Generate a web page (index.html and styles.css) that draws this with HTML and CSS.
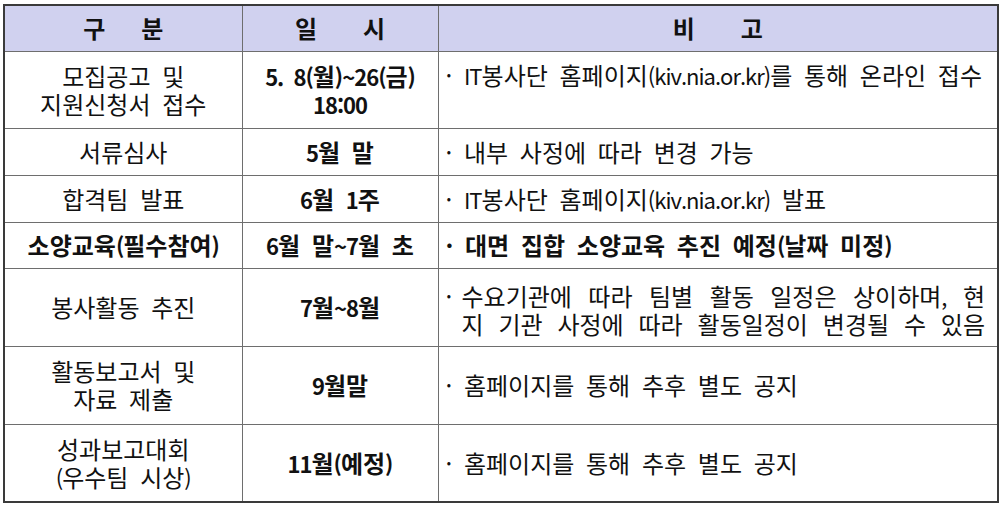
FILE: index.html
```html
<!DOCTYPE html>
<html lang="ko">
<head>
<meta charset="utf-8">
<link rel="stylesheet" href="styles.css">
</head>
<body>
<div class="wrap">
<table class="sched">
  <colgroup>
    <col class="c1"><col class="c2"><col class="c3">
  </colgroup>
  <thead>
    <tr class="head">
      <th><span class="sp sp1"><span>구</span><span>분</span></span></th>
      <th><span class="sp sp2"><span>일</span><span>시</span></span></th>
      <th><span class="sp sp2"><span>비</span><span>고</span></span></th>
    </tr>
  </thead>
  <tbody>
    <tr class="r77">
      <td class="name">모집공고 및<br>지원신청서 접수</td>
      <td class="date"><span class="en">5. 8(</span>월<span class="en">)~26(</span>금<span class="en">)</span><br><span class="en">18:00</span></td>
      <td class="note"><div class="raise">· <span class="en">IT</span>봉사단 홈페이지<span class="en">(kiv.nia.or.kr)</span>를 통해 온라인 접수</div></td>
    </tr>
    <tr class="r47">
      <td class="name">서류심사</td>
      <td class="date"><span class="en">5</span>월 말</td>
      <td class="note">· 내부 사정에 따라 변경 가능</td>
    </tr>
    <tr class="r47">
      <td class="name">합격팀 발표</td>
      <td class="date"><span class="en">6</span>월 <span class="en">1</span>주</td>
      <td class="note">· <span class="en">IT</span>봉사단 홈페이지<span class="en">(kiv.nia.or.kr)</span> 발표</td>
    </tr>
    <tr class="r46 strong">
      <td class="name">소양교육<span class="en">(</span>필수참여<span class="en">)</span></td>
      <td class="date"><span class="en">6</span>월 말<span class="en">~7</span>월 초</td>
      <td class="note">· 대면 집합 소양교육 추진 예정<span class="en">(</span>날짜 미정<span class="en">)</span></td>
    </tr>
    <tr class="r78">
      <td class="name">봉사활동 추진</td>
      <td class="date"><span class="en">7</span>월<span class="en">~8</span>월</td>
      <td class="note">
        <div class="hang">
          <span class="bul">·</span>
          <div class="lines">
            <div class="just">수요기관에 따라 팀별 활동 일정은 상이하며<span class="en">,</span> 현</div>
            <div class="just">지 기관 사정에 따라 활동일정이 변경될 수 있음</div>
          </div>
        </div>
      </td>
    </tr>
    <tr class="r78">
      <td class="name">활동보고서 및<br>자료 제출</td>
      <td class="date"><span class="en">9</span>월말</td>
      <td class="note">· 홈페이지를 통해 추후 별도 공지</td>
    </tr>
    <tr class="r78">
      <td class="name">성과보고대회<br><span class="en">(</span>우수팀 시상<span class="en">)</span></td>
      <td class="date"><span class="en">11</span>월<span class="en">(</span>예정<span class="en">)</span></td>
      <td class="note">· 홈페이지를 통해 추후 별도 공지</td>
    </tr>
  </tbody>
</table>
</div>
</body>
</html>
```

FILE: styles.css
```css
html, body {
  margin: 0;
  padding: 0;
  background: #ffffff;
}
body {
  font-family: "Noto Sans CJK KR", "Noto Sans", sans-serif;
  color: #111111;
}
.wrap {
  padding: 4px 3px 0 3px;
}
.sched {
  border-collapse: collapse;
  width: 994px;
  table-layout: fixed;
  border: 2px solid #3a3a3a;
  font-size: 24px;
  line-height: 28px;
  word-spacing: 5px;
}
.c1 { width: 238px; }
.c2 { width: 196px; }
.c3 { width: 560px; }
.sched th, .sched td {
  border: 1px solid #6e6e6e;
  padding: 0;
  vertical-align: middle;
  white-space: nowrap;
}
.head { height: 46px; }
.head th {
  background: #d0d1ef;
  font-weight: 700;
}
.r77 { height: 77px; }
.r78 { height: 78px; }
.r47 { height: 47px; }
.r46 { height: 46px; }
.sp {
  display: inline-flex;
  justify-content: center;
}
.sp1 { gap: 36px; }
.sp2 { gap: 46px; }
.en {
  font-size: 22px;
  letter-spacing: -1px;
}
.name {
  text-align: center;
}
.date {
  text-align: center;
  font-weight: 700;
}
.sched td.note {
  text-align: left;
  padding: 0 12px 0 7px;
}
.raise {
  padding-bottom: 30px;
}
.strong td { font-weight: 700; }
.just {
  text-align: justify;
  text-align-last: justify;
}
.hang {
  display: flex;
  align-items: flex-start;
  padding-top: 6px;
}
.bul {
  width: 16px;
  flex: none;
}
.lines {
  flex: 1;
}
```
